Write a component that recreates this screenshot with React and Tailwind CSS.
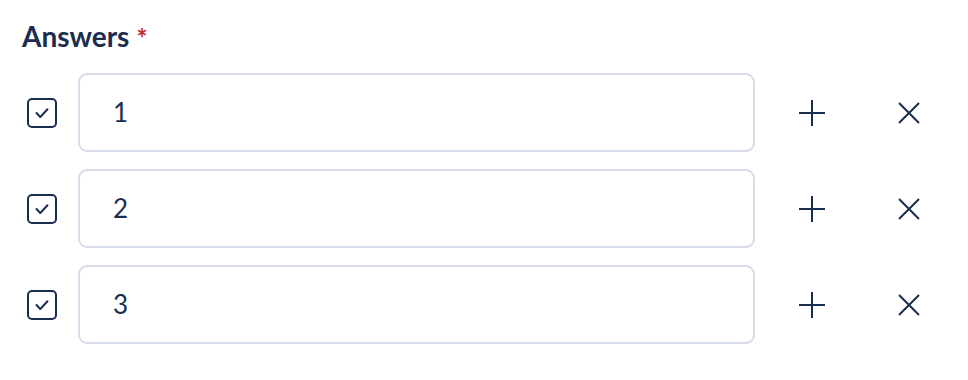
import React from "react";

const rows = ["1", "2", "3"];

function CheckBox() {
  return (
    <div className="w-[30px] h-[30px] rounded-[5px] border-2 border-[#1b2d4f] flex items-center justify-center">
      <svg width="14" height="14" viewBox="0 0 14 14" fill="none">
        <path d="M1.5 7 L5.3 11 L12.5 3.2" stroke="#1b2d4f" strokeWidth="2" strokeLinecap="round" strokeLinejoin="round" />
      </svg>
    </div>
  );
}

export default function App() {
  return (
    <div className="w-[968px] h-[380px] bg-white pt-[20px] pl-[22px]" style={{ fontFamily: "Lato, 'Noto Sans', sans-serif" }}>
      <div className="flex items-start text-[#1b2d4f] font-bold text-[28px] leading-[32px]">
        Answers<span className="text-[#c62828] text-[26px] leading-[26px] ml-[7px] mt-[5px] font-bold">*</span>
      </div>
      <div className="mt-[21px] flex flex-col gap-[17px]">
        {rows.map((r) => (
          <div key={r} className="flex items-center h-[79px]">
            <div className="w-[56px] pl-[5px] flex items-center">
              <CheckBox />
            </div>
            <div className="w-[677px] h-[79px] border-2 border-[#d7dcea] rounded-[9px] flex items-center pl-[33px] text-[26px] text-[#1b2d4f]">
              {r}
            </div>
            <div className="ml-[43px] w-[28px] flex items-center justify-center">
              <svg width="28" height="28" viewBox="0 0 28 28" fill="none">
                <path d="M14 1 V27 M1 14 H27" stroke="#1b2d4f" strokeWidth="2" />
              </svg>
            </div>
            <div className="ml-[72px] w-[22px] flex items-center justify-center">
              <svg width="22" height="22" viewBox="0 0 22 22" fill="none">
                <path d="M1 1 L21 21 M21 1 L1 21" stroke="#1b2d4f" strokeWidth="2" />
              </svg>
            </div>
          </div>
        ))}
      </div>
    </div>
  );
}
